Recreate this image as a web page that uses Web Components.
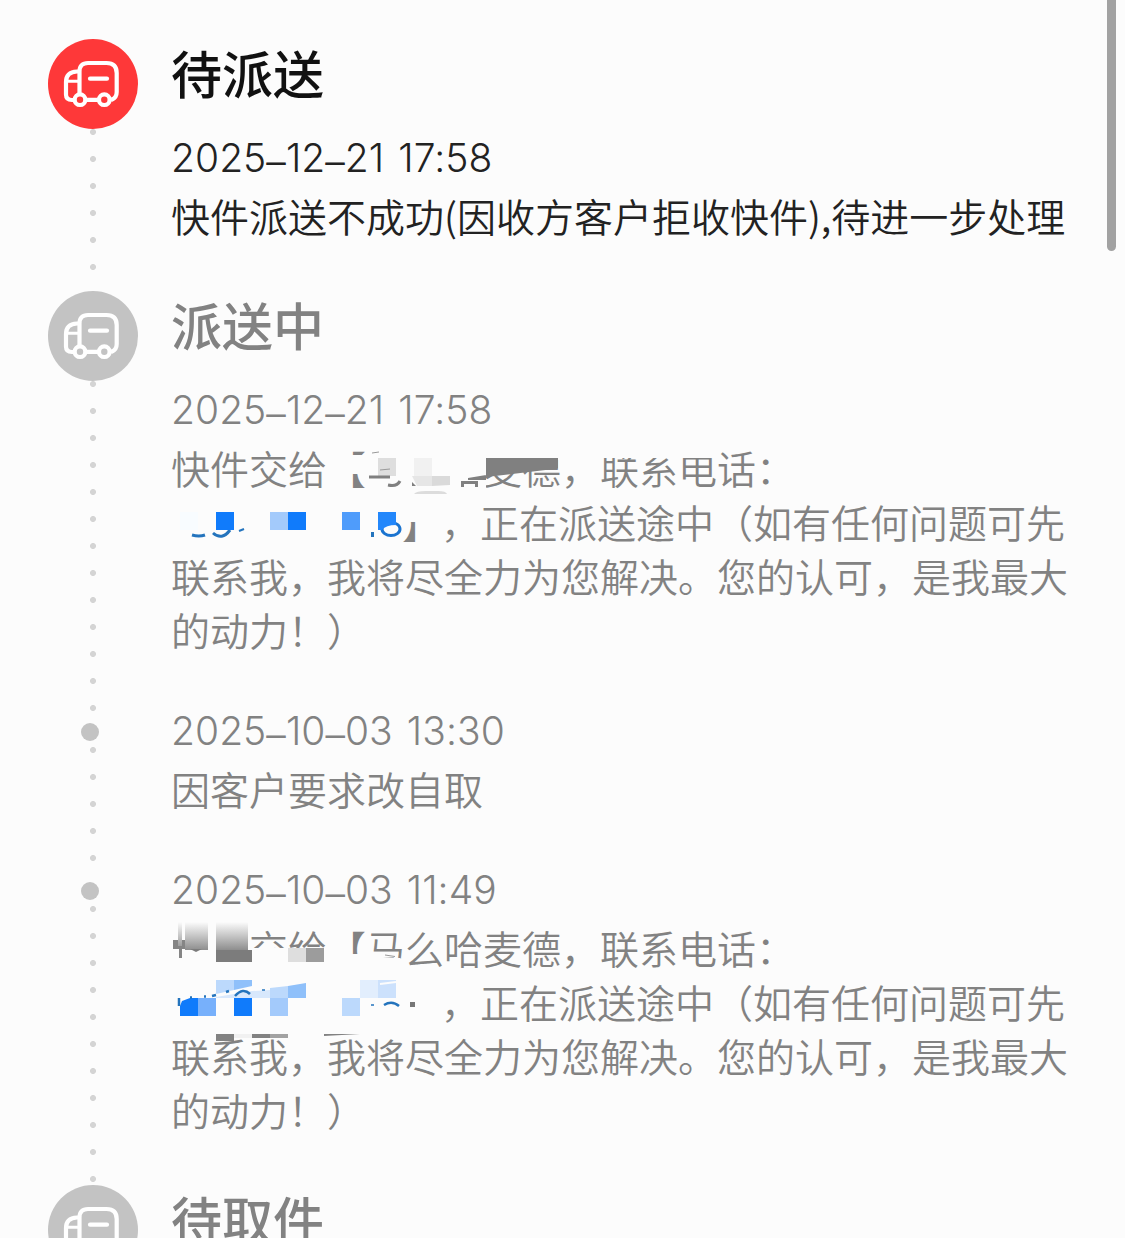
<!DOCTYPE html>
<html lang="zh-CN">
<head>
<meta charset="utf-8">
<title>物流详情</title>
<style>
    body {
        margin: 0;
        background: #fcfcfc;
        height: 1238px;
        overflow: hidden;
        font-family: Inter, "Noto Sans CJK SC", sans-serif;
        text-spacing-trim: space-all;
    }
</style>
</head>
<body>
<track-page>
    <track-row type="active" heading="待派送" time="2025–12–21 17:58" last>快件派送不成功(因收方客户拒收快件),待进一步处理</track-row>
    <track-row type="stage" heading="派送中" time="2025–12–21 17:58">快件交给【马么哈麦德，联系电话：<br><phone-gap></phone-gap>】，正在派送途中（如有任何问题可先<br>联系我，我将尽全力为您解决。您的认可，是我最大<br>的动力！）<mosaic-mask slot="mask" variant="first"></mosaic-mask></track-row>
    <track-row type="event" time="2025–10–03 13:30">因客户要求改自取</track-row>
    <track-row type="event" time="2025–10–03 11:49" last>快件交给【马么哈麦德，联系电话：<br><phone-gap></phone-gap>】，正在派送途中（如有任何问题可先<br>联系我，我将尽全力为您解决。您的认可，是我最大<br>的动力！）<mosaic-mask slot="mask" variant="second"></mosaic-mask></track-row>
    <track-row type="stage" heading="待取件"></track-row>
</track-page>

<script>
class TrackPage extends HTMLElement {
    constructor() {
        super();
        this.shadow = this.attachShadow({mode: 'open'});
    }

    connectedCallback() {
        this.shadow.innerHTML = `
            <style>
                :host {
                    display: block;
                    position: relative;
                    box-sizing: border-box;
                    width: 1125px;
                    height: 1238px;
                    padding: 39px 0 0 48px;
                    overflow: hidden;
                }
                .scrollbar {
                    position: absolute;
                    top: -10px;
                    right: 9px;
                    width: 9px;
                    height: 261px;
                    border-radius: 5px;
                    background: #a2a2a2;
                }
            </style>
            <slot></slot>
            <div class="scrollbar"></div>
        `;
    }
}

class TruckIcon extends HTMLElement {
    constructor() {
        super();
        this.shadow = this.attachShadow({mode: 'open'});
    }

    connectedCallback() {
        this.shadow.innerHTML = `
            <style>
                :host {
                    display: block;
                    flex: none;
                    width: 90px;
                    height: 90px;
                    border-radius: 50%;
                    background: var(--node-color);
                }
                svg { display: block; }
            </style>
            <svg width="90" height="90" fill="none" stroke="#fff" stroke-width="4.2" stroke-linecap="round" stroke-linejoin="round">
                <path d="M26 61 H24 Q18 61 18 55.5 V43 Q18 33 29 32.5 H31"/>
                <path d="M18 42.3 H31" stroke-width="3"/>
                <path d="M31.5 54 V32.5 Q31.5 24 40 24 H58.5 Q68.7 24 68.7 34 V53 Q68.7 58.5 64 60.5"/>
                <path d="M39 60.8 H50"/>
                <path d="M42 39.7 H59"/>
                <circle cx="32" cy="60.7" r="5.3"/>
                <circle cx="56.3" cy="60.7" r="5.3"/>
            </svg>
        `;
    }
}

class TrackRow extends HTMLElement {
    constructor() {
        super();
        this.shadow = this.attachShadow({mode: 'open'});
    }

    getNode() {
        if (this.getAttribute('type') === 'event') {
            return '<div class="dot"></div>';
        }
        return '<truck-icon></truck-icon>';
    }

    render() {
        const type = this.getAttribute('type');
        const heading = this.getAttribute('heading');
        const time = this.getAttribute('time');
        const active = type === 'active';
        this.shadow.innerHTML = `
            <style>
                :host {
                    display: flex;
                    gap: 33px;
                    --node-color: ${active ? '#fe3839' : '#c3c3c3'};
                    color: ${active ? '#222' : '#828282'};
                }
                .rail {
                    display: flex;
                    flex-direction: column;
                    flex: none;
                    width: 90px;
                }
                .dot {
                    flex: none;
                    width: 18px;
                    height: 18px;
                    margin: 12px 0 6px 33px;
                    border-radius: 50%;
                    background: var(--node-color);
                }
                .line {
                    flex: 1;
                    background: radial-gradient(circle at 45px 3px, #d4d4d4 2.6px, transparent 3.4px) 0 0 / 90px 27px repeat-y;
                }
                .content {
                    flex: 1;
                    padding-bottom: ${this.hasAttribute('last') ? 49 : 55}px;
                    white-space: nowrap;
                }
                .heading {
                    height: 74px;
                    line-height: 74px;
                    margin-bottom: 25px;
                    font-size: 51px;
                    font-weight: 500;
                    color: ${active ? '#111' : '#828282'};
                }
                .time {
                    height: 40px;
                    line-height: 40px;
                    font-size: 39px;
                    font-weight: 350;
                    letter-spacing: 0.05px;
                    word-spacing: 3px;
                    margin-bottom: 10px;
                }
                .dash {
                    position: relative;
                    top: 4px;
                }
                .desc {
                    position: relative;
                    font-size: 39px;
                    font-family: "Noto Sans CJK SC", sans-serif;
                    line-height: 54px;
                    font-weight: 350;
                }
            </style>
            <div class="rail">${this.getNode()}<div class="line"></div></div>
            <div class="content">
                ${heading ? `<div class="heading">${heading}</div>` : ''}
                ${time ? `<div class="time">${time.replace(/–/g, '<span class="dash">–</span>')}</div>` : ''}
                <div class="desc"><slot></slot><slot name="mask"></slot></div>
            </div>
        `;
    }

    connectedCallback() {
        this.render();
    }
}

// blank run that keeps the space of the hidden phone number
class PhoneGap extends HTMLElement {
    constructor() {
        super();
        this.shadow = this.attachShadow({mode: 'open'});
    }

    connectedCallback() {
        this.shadow.innerHTML = '<style>:host { display: inline-block; width: 231px; }</style>';
    }
}

// pixel blocks lying over the courier's name and phone
class MosaicMask extends HTMLElement {
    constructor() {
        super();
        this.shadow = this.attachShadow({mode: 'open'});
    }

    drawFirst() {
        return `
            <svg viewBox="171 440 910 216" width="910" height="216">
                <g fill="#fcfcfc">
                    <path d="M345 455h22v19h-22z M366 440h120v60h-120z M486 440h230v18h-230z M398 498h22v24h-22z"/>
                </g>
                <path fill="#808080" d="M486 458h72v10.500l-72 8.500z M468 478l18-3v5h-18z M461 481h17v6h-3v-3h-11v3h-3z"/>
                <path fill="#dedede" d="M378 458h18v18h-18z"/>
                <path fill="#f1f1f1" d="M414 458h18v18h-18z"/>
                <path fill="#e6e6e6" d="M412 476h20v10h-15z"/>
                <path fill="#dadada" d="M432 476h18v9l-18 1z"/>
                <path fill="#dcdcdc" d="M414 494q2-3 12-3h12q8 0 9 3z"/>
                <path fill="#808080" d="M369 475.500h21v3h-21z M412 482l4 4h-4z"/>
                <path fill="none" stroke="#808080" stroke-width="3" d="M388 485q9 2 12-4"/>
                <path fill="none" stroke="#999" d="M380 470l10-1 M372 453l7-1"/>
                <path fill="#f8fcff" d="M180 512h18v18h-18z"/>
                <g fill="none" stroke="#2474bd" stroke-width="3">
                    <path d="M192 535q7 2 13 0"/>
                    <path d="M213 533q9 8 17-3"/>
                    <path d="M239 531l5-2" stroke-width="2"/>
                    <ellipse cx="391" cy="529" rx="9" ry="6.500" stroke="#1b74d0"/>
                    <path d="M372.500 532v5"/>
                </g>
                <path fill="#107bfb" d="M216 512h18v18h-18z M288 512h18v18h-18z"/>
                <path fill="#a3cafb" d="M270 512h18v18h-18z"/>
                <path fill="#4f9cfb" d="M342 512h18v18h-18z"/>
                <path fill="#2387fb" d="M378 512h18v13q-10 0-14 5h-4z"/>
            </svg>
        `;
    }

    drawSecond() {
        return `
            <svg viewBox="171 920 910 216" width="910" height="216">
                <defs>
                    <linearGradient id="fade" x1="0" y1="0" x2="0" y2="1">
                        <stop offset="0" stop-color="#fcfcfc"/>
                        <stop offset="1" stop-color="#8e8e8e"/>
                    </linearGradient>
                </defs>
                <g fill="#fcfcfc">
                    <path d="M168 920h81v56h-81z M249 948h83v28h-83z M345 954h22v24h-22z M366 956l34 2 6 4v16h-40z M398 978h24v50h-24z"/>
                </g>
                <path fill="#858585" d="M173 940h12v9h-3v9h-3v-9h-6z"/>
                <path fill="url(#fade)" d="M185 922h23v28h-23z M216 922h32v28h-32z M178 922h4v24h-4z"/>
                <path fill="#7c7c7c" d="M190 949h12l-6 3z M216 950h36v12h-36z"/>
                <path fill="#dedede" d="M288 948h18v14h-18z"/>
                <path fill="#9c9c9c" d="M306 948h18v14h-18z"/>
                <path fill="none" stroke="#999" d="M385 955l10 1.500"/>
                <path fill="#bcd9fc" d="M216 980h18v10l-18 4z M270 988l18-2v12h-18z M342 998h18v18h-18z"/>
                <path fill="#8fc0fa" d="M234 980h18v6l-18 4z M288 986l18-3v15h-18z"/>
                <path fill="#d8e8fc" d="M216 997l36-6 18-1v8h-54z"/>
                <path fill="#e2eefd" d="M360 980h18v18h-18z"/>
                <path fill="#cce1fc" d="M378 980h18v18h-18z"/>
                <path fill="none" stroke="#fcfcfc" stroke-width="2" d="M380 984l16-2"/>
                <path fill="#107bfb" d="M182 1001l8-3h8v18h-18v-10z M234 998h18v18h-18z"/>
                <path fill="#77b0fb" d="M198 998h18v18h-18z"/>
                <path fill="#a3cafb" d="M270 998h18v18h-18z"/>
                <g fill="none" stroke="#2474bd" stroke-width="2.500">
                    <path d="M235 996q8-9 15-2"/>
                    <path d="M384 1005q8-5 15 1"/>
                    <path d="M179 998v8 M190 997.500h2 M204 996.500h2 M212 996l4-1 M226 992l3-1"/>
                    <path d="M371 1005h3 M262 990h3" stroke-width="1.500"/>
                </g>
                <path fill="#777" d="M410 1002h5v5h-5z"/>
                <path fill="#828282" d="M216 1034h18v7h-18z M252 1034h18v4h-18z M324 1034h36l-36 2z"/>
                <path fill="#f1f1f1" d="M234 1034h18v4h-18z"/>
                <path fill="#a2a2a2" d="M270 1034h18v4h-18z"/>
            </svg>
        `;
    }

    connectedCallback() {
        this.shadow.innerHTML = `
            <style>
                :host {
                    display: block;
                    position: absolute;
                    top: 0;
                    left: 0;
                }
                svg { display: block; }
            </style>
            ${this.getAttribute('variant') === 'first' ? this.drawFirst() : this.drawSecond()}
        `;
    }
}

customElements.define('phone-gap', PhoneGap);
customElements.define('mosaic-mask', MosaicMask);
customElements.define('truck-icon', TruckIcon);
customElements.define('track-row', TrackRow);
customElements.define('track-page', TrackPage);
</script>
</body>
</html>
